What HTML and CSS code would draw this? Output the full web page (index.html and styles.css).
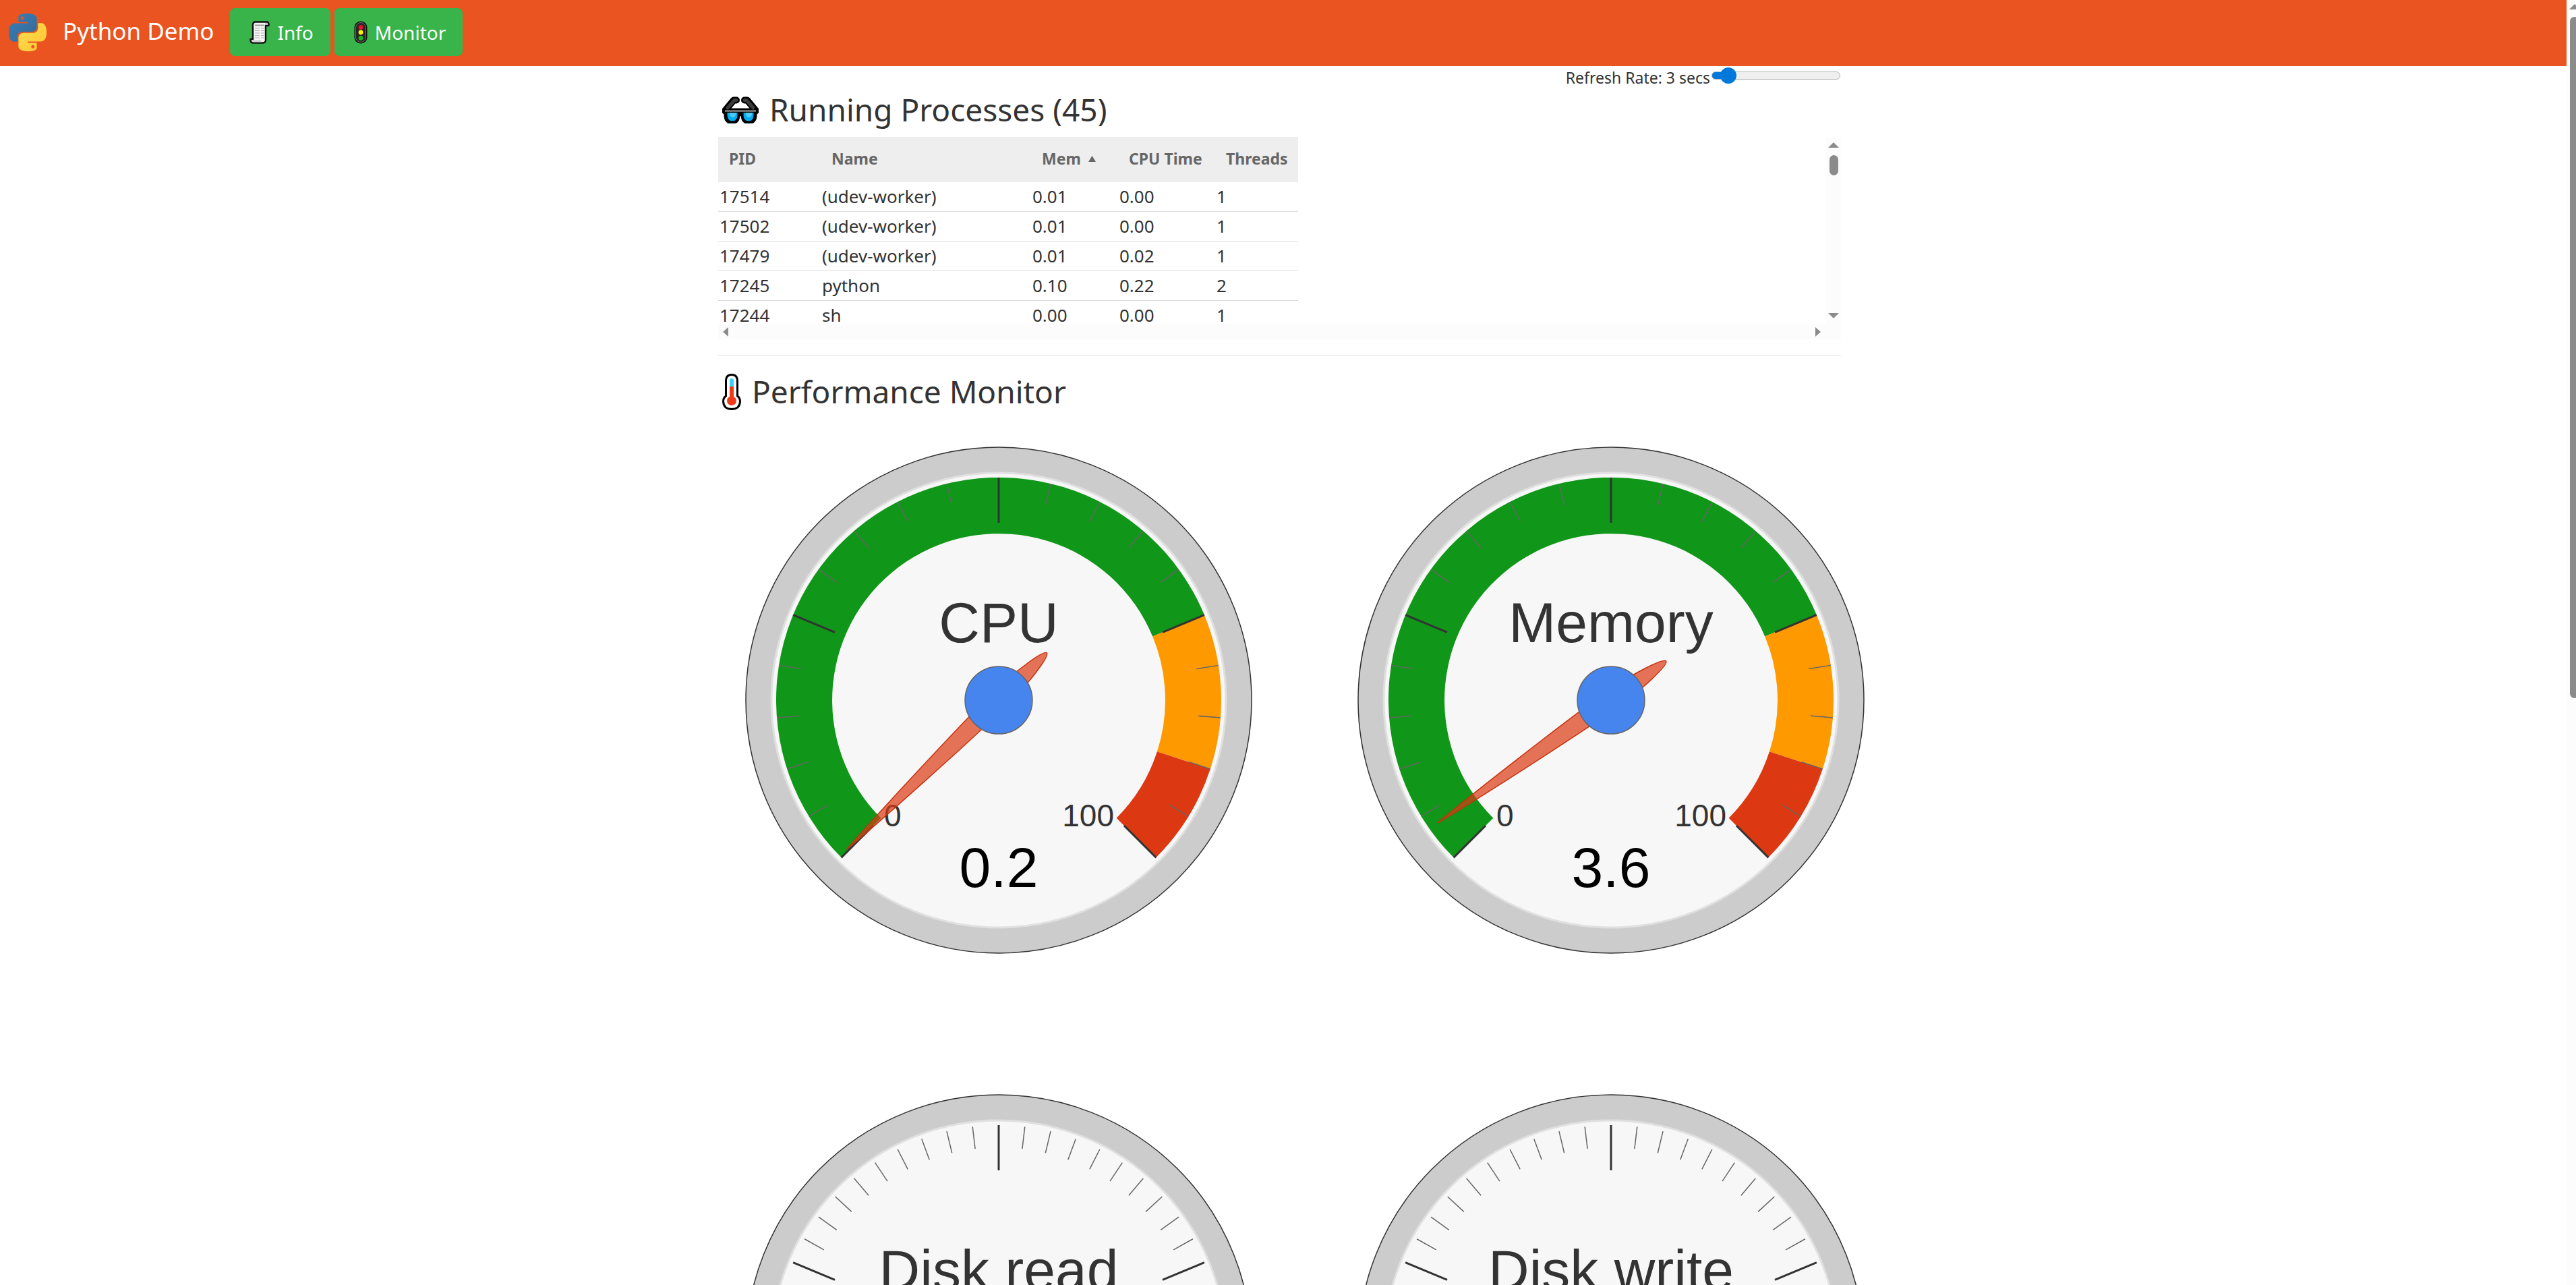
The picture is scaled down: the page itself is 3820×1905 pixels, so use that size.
FILE: index.html
```html
<!DOCTYPE html>
<html lang="en">
<head>
<meta charset="utf-8">
<meta name="viewport" content="width=device-width, initial-scale=1">
<title>Python Demo</title>
<link rel="stylesheet" href="styles.css">
</head>
<body>
<svg class="defs" aria-hidden="true">
  <defs>
    <g id="major">
      <path d="M0-330V-263" transform="rotate(-135)"/>
      <path d="M0-330V-263" transform="rotate(-67.5)"/>
      <path d="M0-330V-263"/>
      <path d="M0-330V-263" transform="rotate(67.5)"/>
      <path d="M0-330V-263" transform="rotate(135)"/>
    </g>
    <g id="minor4">
      <path d="M0-330V-297" transform="rotate(13.5)"/>
      <path d="M0-330V-297" transform="rotate(27)"/>
      <path d="M0-330V-297" transform="rotate(40.5)"/>
      <path d="M0-330V-297" transform="rotate(54)"/>
    </g>
    <g id="minor9">
      <use href="#minor4"/>
      <path d="M0-330V-297" transform="rotate(6.75)"/>
      <path d="M0-330V-297" transform="rotate(20.25)"/>
      <path d="M0-330V-297" transform="rotate(33.75)"/>
      <path d="M0-330V-297" transform="rotate(47.25)"/>
      <path d="M0-330V-297" transform="rotate(60.75)"/>
    </g>
    <g id="coarse">
      <use href="#minor4" transform="rotate(-135)"/>
      <use href="#minor4" transform="rotate(-67.5)"/>
      <use href="#minor4"/>
      <use href="#minor4" transform="rotate(67.5)"/>
    </g>
    <g id="fine">
      <use href="#minor9" transform="rotate(-135)"/>
      <use href="#minor9" transform="rotate(-67.5)"/>
      <use href="#minor9"/>
      <use href="#minor9" transform="rotate(67.5)"/>
    </g>
    <g id="face">
      <circle class="rim" r="375"/>
      <circle class="plate" r="337"/>
    </g>
    <!-- coloured ranges: 0-75, 75-90 and 90-100 over a 270 degree sweep -->
    <g id="bands">
      <path fill="#109618" d="M-233.3 233.3A330 330 0 1 1 304.9-126.3L228.2-94.5A247 247 0 1 0-174.7 174.7Z"/>
      <path fill="#ff9900" d="M304.9-126.3A330 330 0 0 1 313.8 102L234.9 76.3A247 247 0 0 0 228.2-94.5Z"/>
      <path fill="#dc3912" d="M313.8 102A330 330 0 0 1 233.3 233.3L174.7 174.7A247 247 0 0 0 234.9 76.3Z"/>
    </g>
    <path id="needle" d="M0-316C5-260 14-70 14 0C14 50 6 100 0 100C-6 100-14 50-14 0C-14-70-5-260 0-316Z"/>
  </defs>
</svg>

<div class="page">
  <header class="navbar">
    <a class="brand" href="#">
      <svg class="logo" viewBox="0 0 24 24" aria-hidden="true">
        <defs>
          <linearGradient id="pyblue" x1="0" y1="0" x2="1" y2="1"><stop offset="0" stop-color="#387eb8"/><stop offset="1" stop-color="#366994"/></linearGradient>
          <linearGradient id="pyyellow" x1="0" y1="0" x2="1" y2="1"><stop offset="0" stop-color="#ffe052"/><stop offset="1" stop-color="#ffc331"/></linearGradient>
        </defs>
        <path fill="url(#pyblue)" d="M14.25.18l.9.2.73.26.59.3.45.32.34.34.25.34.16.33.1.3.04.26.02.2-.01.13V8.5l-.05.63-.13.55-.21.46-.26.38-.3.31-.33.25-.35.19-.35.14-.33.1-.3.07-.26.04-.21.02H8.77l-.69.05-.59.14-.5.22-.41.27-.33.32-.27.35-.2.36-.15.37-.1.35-.07.32-.04.27-.02.21v3.06H3.17l-.21-.03-.28-.07-.32-.12-.35-.18-.36-.26-.36-.36-.35-.46-.32-.59-.28-.73-.21-.88-.14-1.05-.05-1.23.06-1.22.16-1.04.24-.87.32-.71.36-.57.4-.44.42-.33.42-.24.4-.16.36-.1.32-.05.24-.01h.16l.06.01h8.16v-.83H6.18l-.01-2.75-.02-.37.05-.34.11-.31.17-.28.25-.26.31-.23.38-.2.44-.18.51-.15.58-.12.64-.1.71-.06.77-.04.84-.02 1.27.05zm-6.3 1.98l-.23.33-.08.41.08.41.23.34.33.22.41.09.41-.09.33-.22.23-.34.08-.41-.08-.41-.23-.33-.33-.22-.41-.09-.41.09z"/>
        <path fill="url(#pyyellow)" d="M21.04 6.11l.28.06.32.12.35.18.36.27.36.35.35.47.32.59.28.73.21.88.14 1.04.05 1.23-.06 1.23-.16 1.04-.24.86-.32.71-.36.57-.4.45-.42.33-.42.24-.4.16-.36.09-.32.05-.24.02-.16-.01h-8.22v.82h5.84l.01 2.76.02.36-.05.34-.11.31-.17.29-.25.25-.31.24-.38.2-.44.17-.51.15-.58.13-.64.09-.71.07-.77.04-.84.01-1.27-.04-1.07-.14-.9-.2-.73-.25-.59-.3-.45-.33-.34-.34-.25-.34-.16-.33-.1-.3-.04-.25-.02-.2.01-.13v-5.34l.05-.64.13-.54.21-.46.26-.38.3-.32.33-.24.35-.2.35-.14.33-.1.3-.06.26-.04.21-.02.13-.01h5.84l.69-.05.59-.14.5-.21.41-.28.33-.32.27-.35.2-.36.15-.36.1-.35.07-.32.04-.28.02-.21V6.07h2.09l.14.01zm-6.47 14.25l-.23.33-.08.41.08.41.23.33.33.23.41.08.41-.08.33-.23.23-.33.08-.41-.08-.41-.23-.33-.33-.23-.41-.08-.41.08z"/>
      </svg>
      <span>Python Demo</span>
    </a>
    <nav class="nav">
      <button class="btn" type="button">
        <svg class="ico-scroll" viewBox="0 0 30 34" aria-hidden="true">
          <path d="M8 1.500H26Q29 2 28.500 7H24V28Q24 32.500 20 32.500H5Q1 32 1.500 27H5V6Q5 2 8 1.500Z" fill="#f4f4f4" stroke="#111" stroke-width="2.400" stroke-linejoin="round"/>
          <path d="M3 28.500H17Q17 31 19 31.500H6Q3 31 3 28.500Z" fill="#cfcfcf"/>
          <path d="M23 6Q23 3 25 3H26.500Q27.500 4 27 6Z" fill="#bbb"/>
          <path d="M8 6.500H22" stroke="#999" stroke-width="2"/>
          <path d="M8 11H15M17 11H22M8 14.500H15M17 14.500H22M8 18H15M17 18H22M8 21.500H15M17 21.500H22M8 25H15M17 25H22" stroke="#b0b0b0" stroke-width="1.200"/>
        </svg>
        <span>Info</span>
      </button>
      <button class="btn" type="button">
        <svg class="ico-light" viewBox="0 0 20 34" aria-hidden="true">
          <rect x=".500" y=".500" width="19" height="33" rx="9" fill="#111"/>
          <rect x="2.500" y="2.500" width="15" height="29" rx="7.500" fill="#252525" stroke="#777" stroke-width="1"/>
          <circle cx="10" cy="9.500" r="3.400" fill="#e81224"/>
          <circle cx="10" cy="17" r="3.400" fill="#fff100"/>
          <circle cx="10" cy="25.500" r="3.400" fill="#16b916"/>
        </svg>
        <span>Monitor</span>
      </button>
    </nav>
  </header>

  <main class="content">
    <div class="refresh">
      <label for="rate">Refresh Rate: 3 secs</label>
      <input class="slider" id="rate" type="range" min="1" max="28" value="3">
    </div>

    <section>
      <h2 class="title">
        <svg class="ico-glasses" viewBox="0 0 54 40" aria-hidden="true">
          <path d="M5 20L17 5.500H21M49 20L37 5.500H33" fill="none" stroke="#000" stroke-width="10" stroke-linecap="round" stroke-linejoin="round"/>
          <path d="M1 18.500H53V24L50.500 26V30Q49 40 39 40Q29 40 28.500 28H25.500Q25 40 15 40Q5 40 3.500 30V26L1 24Z" fill="#000" stroke="#000" stroke-width="2" stroke-linejoin="round"/>
          <path d="M8 17L18 5.500H21M46 17L36 5.500H33" fill="none" stroke="#3a3a3a" stroke-width="5" stroke-linecap="round"/>
          <path d="M7.500 24H22.500V28Q22 36.500 15 36.500Q8 36.500 7.500 28ZM31.500 24H46.500V28Q46 36.500 39 36.500Q32 36.500 31.500 28Z" fill="#00adef"/>
          <path d="M11 24H20V27Q19 31 15.500 31Q11.500 30 11 27ZM35 24H44V27Q43 31 39.500 31Q35.500 30 35 27Z" fill="#4fc9fb"/>
          <path d="M4 21.500H50" stroke="#6a6a6a" stroke-width="3"/>
        </svg>
        <span>Running Processes (45)</span>
      </h2>
      <div class="pane">
        <div class="pane-body">
          <table class="procs">
            <colgroup><col class="c-pid"><col class="c-name"><col class="c-mem"><col class="c-cpu"><col class="c-thr"></colgroup>
            <thead>
              <tr><th>PID</th><th>Name</th><th aria-sort="ascending">Mem<svg class="sort" viewBox="0 0 11 9" aria-hidden="true"><path d="M5.500 0L11 9H0Z" fill="#666"/></svg></th><th>CPU Time</th><th>Threads</th></tr>
            </thead>
            <tbody>
              <tr><td>17514</td><td>(udev-worker)</td><td>0.01</td><td>0.00</td><td>1</td></tr>
              <tr><td>17502</td><td>(udev-worker)</td><td>0.01</td><td>0.00</td><td>1</td></tr>
              <tr><td>17479</td><td>(udev-worker)</td><td>0.01</td><td>0.02</td><td>1</td></tr>
              <tr><td>17245</td><td>python</td><td>0.10</td><td>0.22</td><td>2</td></tr>
              <tr><td>17244</td><td>sh</td><td>0.00</td><td>0.00</td><td>1</td></tr>
            </tbody>
          </table>
        </div>
        <div class="vbar" aria-hidden="true">
          <svg class="arrow" viewBox="0 0 16 8"><path d="M8 0L16 8H0Z"/></svg>
          <span class="thumb"></span>
          <svg class="arrow last" viewBox="0 0 16 8"><path d="M0 0H16L8 8Z"/></svg>
        </div>
        <div class="hbar" aria-hidden="true">
          <svg class="arrow-h" viewBox="0 0 8 14"><path d="M8 0V14L0 7Z"/></svg>
          <svg class="arrow-h" viewBox="0 0 8 14"><path d="M0 0V14L8 7Z"/></svg>
        </div>
      </div>
    </section>

    <hr class="rule">

    <section>
      <h2 class="title">
        <svg class="ico-thermo" viewBox="0 0 28 54" aria-hidden="true">
          <path d="M5.500 33V11Q5.500 1.500 14 1.500Q22.500 1.500 22.500 11V33Q26.500 36 26.500 41Q26 52.500 14 52.500Q2 52.500 1.500 41Q1.500 36 5.500 33Z" fill="#fff" stroke="#000" stroke-width="3"/>
          <path d="M11 19V10Q11 7 14 7Q17 7 17 10V19Z" fill="#3ad1f8"/>
          <path d="M11 19H17V34Q21 36 21 40Q20.500 47 14 47Q7.500 47 7 40Q7 36 11 34Z" fill="#f03a17"/>
        </svg>
        <span>Performance Monitor</span>
      </h2>
      <div class="gauges">
        <svg class="gauge" viewBox="-416 -417 833 833" role="img" aria-label="CPU 0.2">
          <use href="#face"/><use href="#bands"/>
          <use class="minor" href="#coarse"/><use class="major" href="#major"/>
          <text class="name" y="-86">CPU</text>
          <text class="limit low" x="-170" y="187">0</text><text class="limit high" x="171" y="187">100</text>
          <text class="value" y="277">0.2</text>
          <use class="needle" href="#needle" transform="rotate(-134.460)"/>
          <circle class="hub" r="50"/>
        </svg>
        <svg class="gauge" viewBox="-416 -417 833 833" role="img" aria-label="Memory 3.6">
          <use href="#face"/><use href="#bands"/>
          <use class="minor" href="#coarse"/><use class="major" href="#major"/>
          <text class="name" y="-86">Memory</text>
          <text class="limit low" x="-170" y="187">0</text><text class="limit high" x="171" y="187">100</text>
          <text class="value" y="277">3.6</text>
          <use class="needle" href="#needle" transform="rotate(-125.280)"/>
          <circle class="hub" r="50"/>
        </svg>
        <svg class="gauge" viewBox="-416 -417 833 833" role="img" aria-label="Disk read">
          <use href="#face"/>
          <use class="minor" href="#fine"/><use class="major" href="#major"/>
          <text class="name" y="-86">Disk read</text>
          <use class="needle" href="#needle" transform="rotate(-135)"/>
          <circle class="hub" r="50"/>
        </svg>
        <svg class="gauge" viewBox="-416 -417 833 833" role="img" aria-label="Disk write">
          <use href="#face"/>
          <use class="minor" href="#fine"/><use class="major" href="#major"/>
          <text class="name" y="-86">Disk write</text>
          <use class="needle" href="#needle" transform="rotate(-135)"/>
          <circle class="hub" r="50"/>
        </svg>
      </div>
    </section>
  </main>
</div>
<div class="scroller" aria-hidden="true">
  <svg class="arrow" viewBox="0 0 16 8"><path d="M8 0L16 8H0Z"/></svg>
  <span class="scroller-thumb"></span>
</div>
</body>
</html>
```
FILE: styles.css
```css
* { box-sizing: border-box; }

body {
  margin: 0;
  display: flex;
  height: 100vh;
  overflow: hidden;
  background: #fff;
  color: #333;
  font-family: "Noto Sans", sans-serif;
}

svg { display: block; flex: none; }
.defs { width: 0; height: 0; position: absolute; }

.page { flex: 1; min-width: 0; }

/* Top bar */
.navbar {
  display: flex;
  align-items: center;
  height: 98px;
  padding: 0 13px 3px;
  background: #e95420;
}
.brand {
  display: flex;
  align-items: center;
  gap: 24px;
  margin-right: 24px;
  color: #fff;
  font-size: 35px;
  line-height: 48px;
  text-decoration: none;
}
.brand span { padding-bottom: 4px; }
.logo { width: 56px; height: 56px; }
.nav { display: flex; gap: 6px; }
.btn {
  display: flex;
  align-items: center;
  gap: 11px;
  height: 71px;
  padding: 0 25px 0 29px;
  border: 0;
  border-radius: 7px;
  background: #38b44a;
  color: #fff;
  font: 28px/40px "Noto Sans", sans-serif;
}
.ico-scroll { width: 30px; height: 34px; }
.ico-light { width: 20px; height: 34px; }

/* Content column */
.content {
  max-width: 1676px;
  margin: 0 auto;
  padding-right: 11px;
}
.refresh {
  display: flex;
  justify-content: flex-end;
  height: 32px;
  font-size: 23px;
  line-height: 34px;
}
.slider {
  appearance: none;
  width: 191px;
  height: 24px;
  margin: 2px 1px 0 2px;
  background: none;
}
.slider::-webkit-slider-runnable-track {
  height: 12px;
  border: 1px solid #b2b2b2;
  border-radius: 6px;
  background: linear-gradient(to right, #0079db 24px, #efefef 24px);
}
.slider::-webkit-slider-thumb {
  appearance: none;
  width: 24px;
  height: 24px;
  margin-top: -7px;
  border-radius: 50%;
  background: #0079db;
}

.title {
  display: flex;
  align-items: center;
  margin: 0 0 7px;
  padding-left: 6px;
  font-size: 46px;
  font-weight: 400;
  line-height: 66px;
}
.title span { padding-bottom: 2px; line-height: 64px; }
.ico-glasses { width: 54px; height: 40px; margin-right: 16px; }
.ico-thermo { width: 28px; height: 54px; margin-right: 16px; }

/* Process list */
.pane {
  display: grid;
  grid-template: 277px 23px / 1fr 22px;
}
.pane-body { overflow: hidden; }
.procs {
  width: 860px;
  table-layout: fixed;
  border-collapse: separate;
  border-spacing: 0;
}
.c-pid { width: 152px; }
.c-name { width: 312px; }
.c-mem { width: 129px; }
.c-cpu { width: 144px; }
.c-thr { width: 123px; }
.procs th {
  height: 67px;
  padding: 0 0 4px 16px;
  background: #eee;
  color: #666;
  font-size: 23px;
  line-height: 32px;
  text-align: left;
  white-space: nowrap;
}
.procs td {
  height: 44px;
  padding: 0 2px 2px;
  border-bottom: 1px solid #ddd;
  font-size: 26px;
  line-height: 40px;
  white-space: nowrap;
}
.sort { display: inline-block; width: 11px; height: 9px; margin-left: 11px; vertical-align: 4px; }

.vbar {
  grid-row: 1 / 3;
  grid-column: 2;
  display: flex;
  flex-direction: column;
  align-items: center;
  padding: 8px 0 31px;
  background: #fcfcfc;
}
.hbar {
  display: flex;
  justify-content: space-between;
  align-items: center;
  padding: 0 8px 0 7px;
  background: #fcfcfc;
}
.arrow { width: 16px; height: 8px; fill: #8b8b8b; }
.arrow.last { margin-top: auto; }
.arrow-h { width: 8px; height: 14px; fill: #8b8b8b; }
.thumb { width: 13px; height: 30px; margin-top: 11px; border-radius: 7px; background: #8b8b8b; }

.rule { height: 1px; margin: 24px 0 20px; border: 0; background: #e1e1e1; }

/* Gauges */
.gauges {
  display: grid;
  grid-template-columns: repeat(2, 833px);
  gap: 127px 75px;
}
.gauge { width: 100%; aspect-ratio: 1; font-family: "Liberation Sans", sans-serif; text-anchor: middle; }
.rim { fill: #ccc; stroke: #333; stroke-width: 1.5; }
.plate { fill: #f7f7f7; stroke: #e0e0e0; stroke-width: 3; }
.major { stroke: #333; stroke-width: 3; }
.minor { stroke: #666; stroke-width: 1.5; }
.name, .value { font-size: 84px; }
.name { fill: #333; }
.value { fill: #000; }
.limit { font-size: 46px; fill: #333; }
.low { text-anchor: start; }
.high { text-anchor: end; }
.needle { fill: #dc3912; fill-opacity: 0.7; stroke: #c63310; stroke-width: 1.5; }
.hub { fill: #4684ee; stroke: #666; stroke-width: 1.5; }

/* Window scrollbar */
.scroller {
  flex: none;
  display: flex;
  flex-direction: column;
  width: 14px;
  padding: 6px 0 0 4px;
  overflow: hidden;
  background: #fcfcfc;
}
.scroller-thumb {
  flex: none;
  width: 13px;
  height: 53.2%;
  margin: 11px 0 0 1px;
  border-radius: 7px;
  background: #8b8b8b;
}
```
